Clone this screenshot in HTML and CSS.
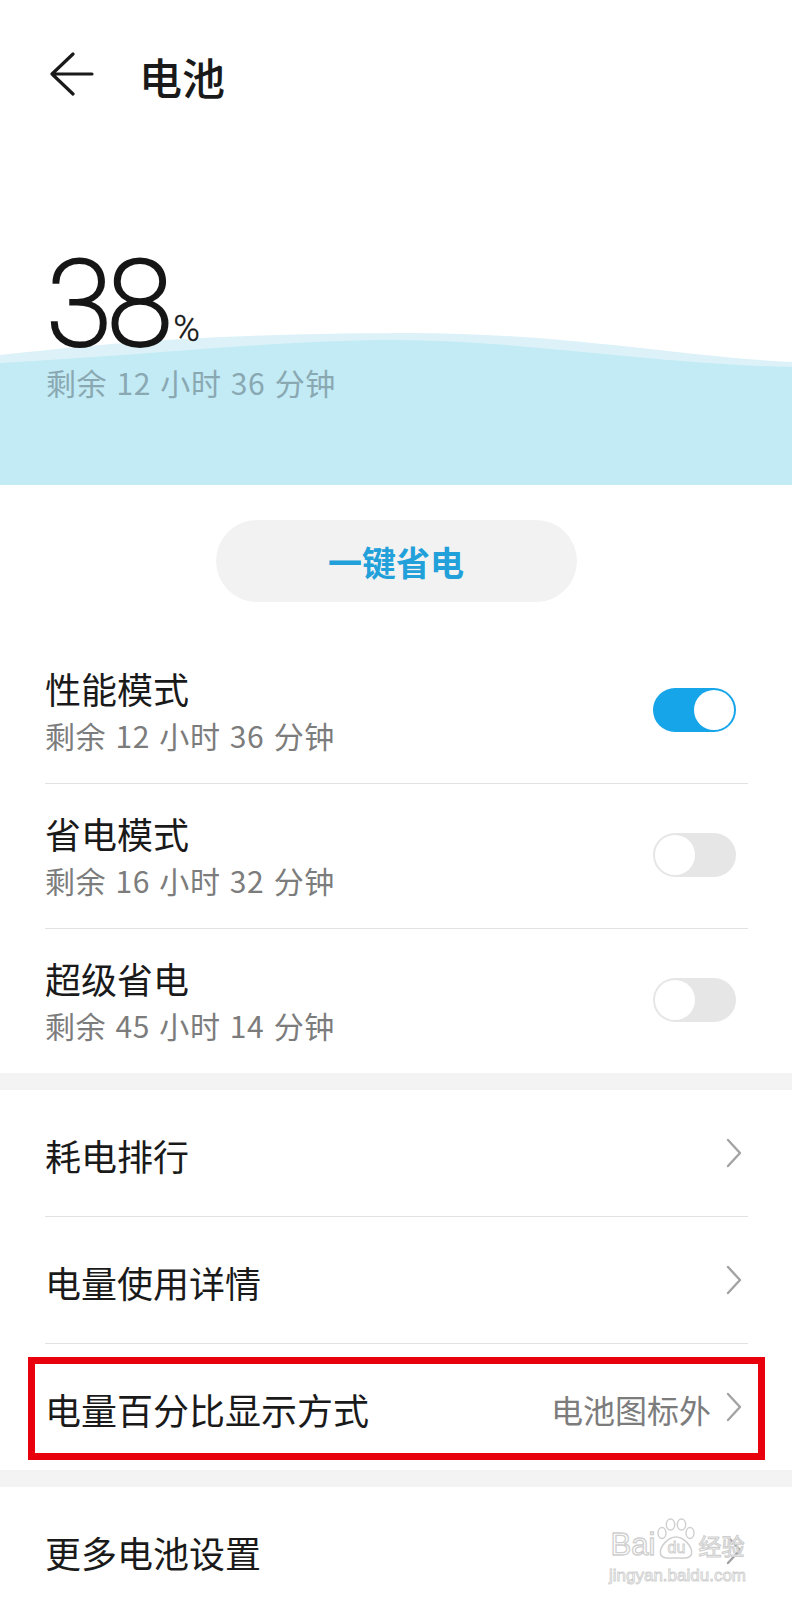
FILE: index.html
```html
<!DOCTYPE html>
<html lang="zh-CN">
<head>
<meta charset="utf-8">
<title>电池</title>
<link rel="stylesheet" href="styles.css">
</head>
<body>
<div class="screen">
  <header class="topbar">
    <svg class="back" viewBox="0 0 44 44" width="44" height="44" aria-hidden="true">
      <path d="M23 2 L2 22 L23 42 M2 22 H42" fill="none" stroke="#1a1a1a" stroke-width="3.2" stroke-linecap="round" stroke-linejoin="round"/>
    </svg>
    <h1 class="title">电池</h1>
  </header>

  <section class="hero">
    <svg class="waves" viewBox="0 0 792 333" preserveAspectRatio="none" aria-hidden="true">
      <path d="M0 203 C100 192 200 182 400 181 C560 180 680 205 792 210 V333 H0 Z" fill="#dcf2f8"/>
      <path d="M0 211 C150 203 280 188 394 188 C520 188 650 212 792 215 V333 H0 Z" fill="#c2ebf5"/>
    </svg>
    <div class="level"><span class="num">38</span><span class="pct">%</span></div>
    <div class="remain">剩余 12 小时 36 分钟</div>
  </section>

  <div class="save-wrap">
    <button class="save-btn" type="button">一键省电</button>
  </div>

  <ul class="modes">
    <li class="mode">
      <div class="mode-text">
        <div class="mode-title">性能模式</div>
        <div class="mode-sub">剩余 12 小时 36 分钟</div>
      </div>
      <span class="switch on"><span class="knob"></span></span>
    </li>
    <li class="mode">
      <div class="mode-text">
        <div class="mode-title">省电模式</div>
        <div class="mode-sub">剩余 16 小时 32 分钟</div>
      </div>
      <span class="switch"><span class="knob"></span></span>
    </li>
    <li class="mode">
      <div class="mode-text">
        <div class="mode-title">超级省电</div>
        <div class="mode-sub">剩余 45 小时 14 分钟</div>
      </div>
      <span class="switch"><span class="knob"></span></span>
    </li>
  </ul>

  <div class="band"></div>

  <ul class="links">
    <li class="link">
      <span class="link-title">耗电排行</span>
      <svg class="chev" viewBox="0 0 16 30" width="16" height="30" aria-hidden="true"><path d="M2 2 L14 15 L2 28" fill="none" stroke="#a3a3a3" stroke-width="2.4" stroke-linecap="round" stroke-linejoin="round"/></svg>
    </li>
    <li class="link">
      <span class="link-title">电量使用详情</span>
      <svg class="chev" viewBox="0 0 16 30" width="16" height="30" aria-hidden="true"><path d="M2 2 L14 15 L2 28" fill="none" stroke="#a3a3a3" stroke-width="2.4" stroke-linecap="round" stroke-linejoin="round"/></svg>
    </li>
    <li class="link marked">
      <span class="link-title">电量百分比显示方式</span>
      <span class="link-value">电池图标外</span>
      <svg class="chev" viewBox="0 0 16 30" width="16" height="30" aria-hidden="true"><path d="M2 2 L14 15 L2 28" fill="none" stroke="#a3a3a3" stroke-width="2.4" stroke-linecap="round" stroke-linejoin="round"/></svg>
      <span class="redbox"></span>
    </li>
  </ul>

  <div class="band"></div>

  <ul class="links">
    <li class="link last">
      <span class="link-title">更多电池设置</span>
      <svg class="chev" viewBox="0 0 16 30" width="16" height="30" aria-hidden="true"><path d="M2 2 L14 15 L2 28" fill="none" stroke="#a3a3a3" stroke-width="2.4" stroke-linecap="round" stroke-linejoin="round"/></svg>
      <div class="watermark">
        <div class="wm-top">
          <span class="wm-bai">Bai</span>
          <span class="wm-paw">
            <svg viewBox="0 0 40 42" width="40" height="42" aria-hidden="true">
              <g fill="rgba(255,255,255,0.9)" stroke="#d0d0d0" stroke-width="1.5">
                <ellipse cx="6" cy="15" rx="4" ry="5.5"/>
                <ellipse cx="14.5" cy="6.5" rx="4.2" ry="5.5"/>
                <ellipse cx="25.5" cy="6.5" rx="4.2" ry="5.5"/>
                <ellipse cx="34" cy="15" rx="4" ry="5.5"/>
                <path d="M20 19 C28 19 37 29 35.5 36 C34 41.5 26 40 20 40 C14 40 6 41.5 4.5 36 C3 29 12 19 20 19 Z"/>
              </g>
            </svg>
            <span class="wm-du">du</span>
          </span>
          <span class="wm-jy">经验</span>
        </div>
        <div class="wm-url">jingyan.baidu.com</div>
      </div>
    </li>
  </ul>
</div>
</body>
</html>
```

FILE: styles.css
```css
* {
  box-sizing: border-box;
}

html, body {
  margin: 0;
  padding: 0;
  background: #ffffff;
}

body {
  font-family: "Noto Sans CJK SC", "Noto Sans", sans-serif;
  color: #1a1a1a;
}

.screen {
  width: 792px;
  overflow: hidden;
}

ul {
  list-style: none;
  margin: 0;
  padding: 0;
}

/* Top bar */
.topbar {
  height: 152px;
  display: flex;
  align-items: center;
  padding-left: 50px;
}

.back {
  display: block;
  flex: none;
  margin-top: -4px;
}

.title {
  margin: 0 0 0 45px;
  font-size: 43px;
  font-weight: 500;
  line-height: 50px;
  color: #1a1a1a;
}

/* Hero with waves */
.hero {
  position: relative;
  height: 333px;
  padding: 92px 0 0 46px;
}

.waves {
  position: absolute;
  left: 0;
  top: 0;
  width: 100%;
  height: 100%;
  z-index: 0;
}

.level {
  position: relative;
  z-index: 1;
  height: 122px;
  display: flex;
  align-items: baseline;
}

.num {
  font-family: "Roboto", "Liberation Sans", sans-serif;
  font-weight: 200;
  font-size: 121px;
  line-height: 122px;
  letter-spacing: -6px;
  color: #161616;
  -webkit-text-stroke: 2.2px #161616;
}

.pct {
  font-family: "Roboto", "Liberation Sans", sans-serif;
  font-weight: 300;
  font-size: 36px;
  line-height: 40px;
  margin-left: 6px;
  position: relative;
  top: -5px;
  color: #161616;
  -webkit-text-stroke: 0.4px #161616;
}

.remain {
  position: relative;
  z-index: 1;
  margin-top: 1px;
  font-size: 30px;
  line-height: 30px;
  letter-spacing: 0.6px;
  word-spacing: 2px;
  color: #8aa8b2;
}

/* One-tap save button */
.save-wrap {
  display: flex;
  justify-content: center;
  padding-top: 35px;
  padding-bottom: 37px;
}

.save-btn {
  width: 361px;
  height: 82px;
  border: none;
  border-radius: 41px;
  background: #f2f2f2;
  font-family: "Noto Sans CJK SC", "Noto Sans", sans-serif;
  font-size: 34px;
  font-weight: 700;
  color: #22a0da;
  padding: 0;
}

/* Mode rows with switches */
.mode {
  display: flex;
  align-items: center;
  justify-content: space-between;
  margin: 0 44px 0 45px;
  padding: 27px 12px 29px 0;
  border-bottom: 1px solid #e2e2e2;
}

.mode:last-child {
  border-bottom: none;
}

.mode-title {
  font-size: 36px;
  line-height: 44px;
  color: #1a1a1a;
}

.mode-sub {
  margin-top: 6px;
  font-size: 30px;
  line-height: 38px;
  letter-spacing: 0.6px;
  word-spacing: 2px;
  color: #7c7c7c;
}

.switch {
  width: 83px;
  height: 44px;
  border-radius: 22px;
  background: #e6e6e6;
  display: flex;
  align-items: center;
  justify-content: flex-start;
  padding: 0 2px;
  flex: none;
}

.switch.on {
  background: #17a5ea;
  justify-content: flex-end;
}

.knob {
  width: 40px;
  height: 40px;
  border-radius: 50%;
  background: #ffffff;
}

.band {
  height: 17px;
  background: #f3f3f3;
}

/* Navigation rows */
.link {
  position: relative;
  display: flex;
  align-items: center;
  height: 127px;
  margin: 0 44px 0 45px;
  padding-right: 6px;
  border-bottom: 1px solid #e2e2e2;
}

.link:last-child {
  height: 126px;
  border-bottom: none;
}

.link-title {
  flex: 1;
  font-size: 36px;
  line-height: 44px;
  color: #1a1a1a;
  padding-top: 4px;
}

.link-value {
  font-size: 32px;
  line-height: 40px;
  color: #7c7c7c;
  margin-right: 15px;
  padding-top: 4px;
}

.chev {
  display: block;
  flex: none;
}

.redbox {
  position: absolute;
  top: 13px;
  bottom: 10px;
  left: -17px;
  right: -17px;
  border: 7px solid #e8000c;
  pointer-events: none;
}

/* Baidu watermark overlay */
.watermark {
  position: absolute;
  right: 0;
  top: 29px;
  width: 141px;
  display: flex;
  flex-direction: column;
  align-items: center;
  white-space: nowrap;
}

.wm-top {
  display: flex;
  align-items: flex-end;
  height: 44px;
}

.wm-bai {
  font-family: "Liberation Sans", sans-serif;
  font-size: 31px;
  line-height: 30px;
  color: rgba(255, 255, 255, 0.9);
  -webkit-text-stroke: 1.3px #cfcfcf;
}

.wm-jy {
  font-family: "Noto Sans CJK SC", sans-serif;
  font-size: 23px;
  line-height: 30px;
  color: rgba(255, 255, 255, 0.9);
  -webkit-text-stroke: 1.1px #cfcfcf;
}

.wm-paw {
  position: relative;
  width: 40px;
  height: 42px;
  margin: 0 2px 0 1px;
}

.wm-paw svg {
  display: block;
}

.wm-du {
  position: absolute;
  left: 0;
  right: 0;
  top: 21px;
  text-align: center;
  font-family: "Liberation Sans", sans-serif;
  font-size: 16px;
  line-height: 18px;
  color: #ffffff;
  -webkit-text-stroke: 0.9px #cfcfcf;
}

.wm-url {
  margin-top: 6px;
  font-family: "Liberation Sans", sans-serif;
  font-size: 17px;
  line-height: 19px;
  color: rgba(255, 255, 255, 0.9);
  -webkit-text-stroke: 0.9px #d0d0d0;
}
```
